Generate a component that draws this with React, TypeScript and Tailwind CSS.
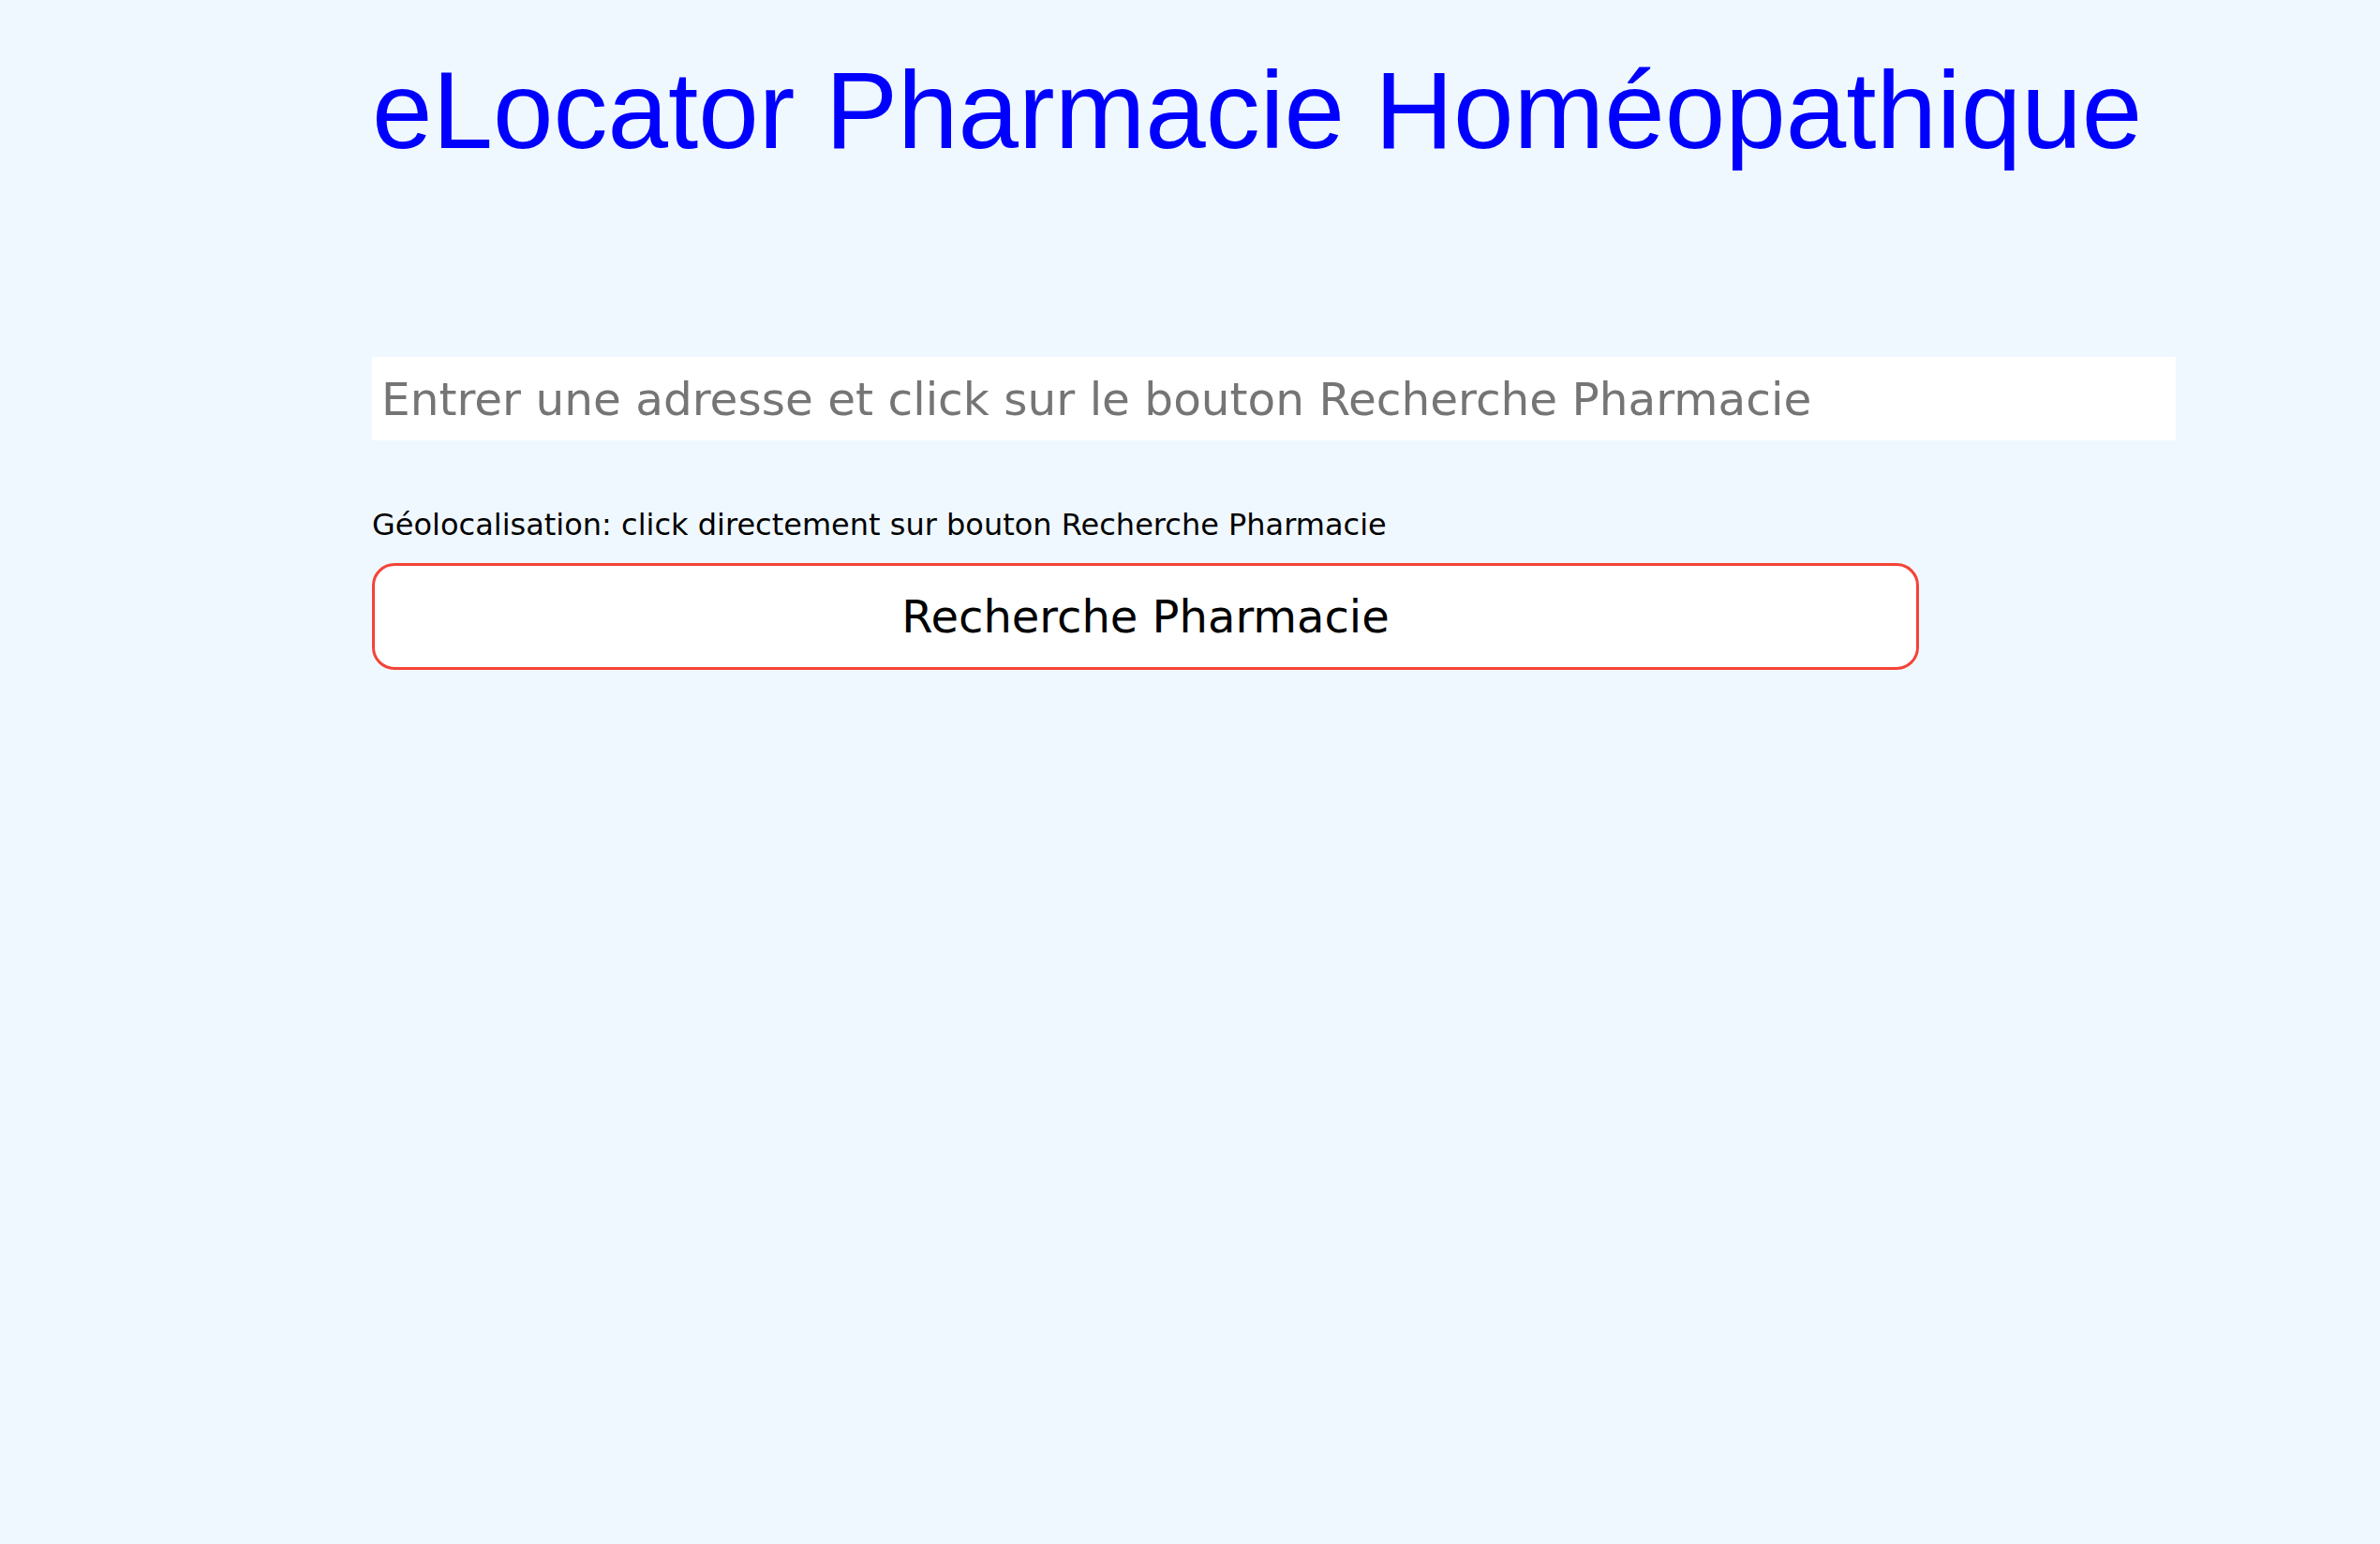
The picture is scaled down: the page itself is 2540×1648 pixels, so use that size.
import React from 'react';

export default function App() {
  return (
    <div className="min-h-[1648px] w-full bg-[#f0f8ff]">
      <div className="flex flex-col items-start pl-[397px] font-['DejaVu_Sans',Verdana,sans-serif]">
        <h1 className="mt-[60px] whitespace-nowrap font-['Liberation_Sans',Arial,sans-serif] text-[116px] font-normal leading-none text-[#0000ff]">
          eLocator Pharmacie Homéopathique
        </h1>
        <input
          type="text"
          placeholder="Entrer une adresse et click sur le bouton Recherche Pharmacie"
          className="mt-[205px] h-[89px] w-[1925px] bg-white px-[10px] text-[48.5px] text-black outline-none placeholder:text-[#757575]"
        />
        <p className="mt-[74px] text-[32px] leading-none text-black">
          Géolocalisation: click directement sur bouton Recherche Pharmacie
        </p>
        <button className="mt-[25px] h-[114px] w-[1651px] rounded-[24px] border-[3px] border-[#f44336] bg-white text-[48px] text-black">
          Recherche Pharmacie
        </button>
      </div>
    </div>
  );
}
